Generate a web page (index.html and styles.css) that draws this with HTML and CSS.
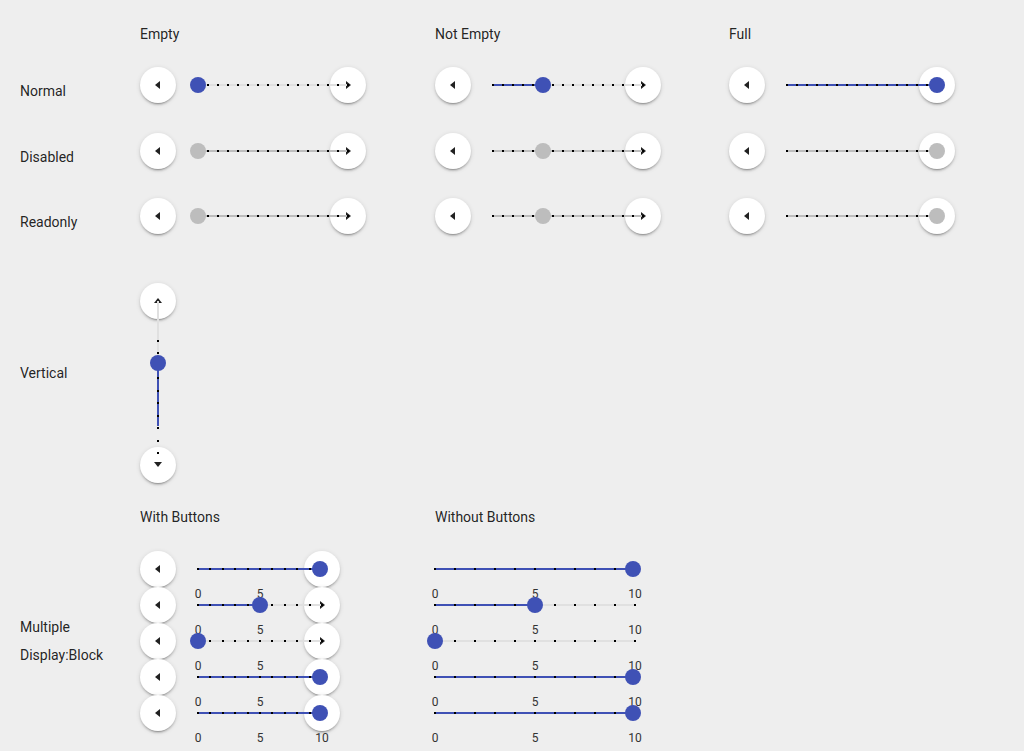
FILE: index.html
```html
<!DOCTYPE html>
<html lang="en">
<head>
    <meta charset="UTF-8">
    <meta name="viewport" content="width=device-width, initial-scale=1.0">
    <title>Slider Demo</title>
    <link rel="stylesheet" href="styles.css">
</head>
<body>
    <div class="page">
        <!-- States -->
        <div class="row head-row">
            <div class="row-label"></div>
            <div class="col-title">Empty</div>
            <div class="col-title">Not Empty</div>
            <div class="col-title">Full</div>
        </div>

        <div class="row slider-row">
            <div class="row-label">Normal</div>
            <div class="cell">
                <div class="slider">
                    <span class="slider-btn"><i class="arrow arrow-left"></i></span>
                    <div class="track">
                        <div class="track-fill" style="width: 0%"></div>
                        <div class="track-ticks"></div>
                        <div class="thumb" style="left: 0%"></div>
                    </div>
                    <span class="slider-btn"><i class="arrow arrow-right"></i></span>
                </div>
            </div>
            <div class="cell">
                <div class="slider">
                    <span class="slider-btn"><i class="arrow arrow-left"></i></span>
                    <div class="track">
                        <div class="track-fill" style="width: 33.3%"></div>
                        <div class="track-ticks"></div>
                        <div class="thumb" style="left: 33.3%"></div>
                    </div>
                    <span class="slider-btn"><i class="arrow arrow-right"></i></span>
                </div>
            </div>
            <div class="cell">
                <div class="slider">
                    <span class="slider-btn"><i class="arrow arrow-left"></i></span>
                    <div class="track">
                        <div class="track-fill" style="width: 100%"></div>
                        <div class="track-ticks"></div>
                        <div class="thumb" style="left: 100%"></div>
                    </div>
                    <span class="slider-btn"><i class="arrow arrow-right"></i></span>
                </div>
            </div>
        </div>

        <div class="row slider-row row-disabled">
            <div class="row-label">Disabled</div>
            <div class="cell">
                <div class="slider is-disabled">
                    <span class="slider-btn"><i class="arrow arrow-left"></i></span>
                    <div class="track">
                        <div class="track-ticks"></div>
                        <div class="thumb" style="left: 0%"></div>
                    </div>
                    <span class="slider-btn"><i class="arrow arrow-right"></i></span>
                </div>
            </div>
            <div class="cell">
                <div class="slider is-disabled">
                    <span class="slider-btn"><i class="arrow arrow-left"></i></span>
                    <div class="track">
                        <div class="track-ticks"></div>
                        <div class="thumb" style="left: 33.3%"></div>
                    </div>
                    <span class="slider-btn"><i class="arrow arrow-right"></i></span>
                </div>
            </div>
            <div class="cell">
                <div class="slider is-disabled">
                    <span class="slider-btn"><i class="arrow arrow-left"></i></span>
                    <div class="track">
                        <div class="track-ticks"></div>
                        <div class="thumb" style="left: 100%"></div>
                    </div>
                    <span class="slider-btn"><i class="arrow arrow-right"></i></span>
                </div>
            </div>
        </div>

        <div class="row slider-row row-readonly">
            <div class="row-label">Readonly</div>
            <div class="cell">
                <div class="slider is-disabled">
                    <span class="slider-btn"><i class="arrow arrow-left"></i></span>
                    <div class="track">
                        <div class="track-ticks"></div>
                        <div class="thumb" style="left: 0%"></div>
                    </div>
                    <span class="slider-btn"><i class="arrow arrow-right"></i></span>
                </div>
            </div>
            <div class="cell">
                <div class="slider is-disabled">
                    <span class="slider-btn"><i class="arrow arrow-left"></i></span>
                    <div class="track">
                        <div class="track-ticks"></div>
                        <div class="thumb" style="left: 33.3%"></div>
                    </div>
                    <span class="slider-btn"><i class="arrow arrow-right"></i></span>
                </div>
            </div>
            <div class="cell">
                <div class="slider is-disabled">
                    <span class="slider-btn"><i class="arrow arrow-left"></i></span>
                    <div class="track">
                        <div class="track-ticks"></div>
                        <div class="thumb" style="left: 100%"></div>
                    </div>
                    <span class="slider-btn"><i class="arrow arrow-right"></i></span>
                </div>
            </div>
        </div>

        <!-- Vertical -->
        <div class="row vertical-row">
            <div class="row-label vertical-label">Vertical</div>
            <div class="cell">
                <div class="vslider">
                    <span class="slider-btn"><i class="arrow arrow-up"></i></span>
                    <div class="vtrack">
                        <div class="vtrack-line"></div>
                        <div class="vtrack-fill"></div>
                        <div class="vtrack-ticks"></div>
                        <div class="thumb vthumb"></div>
                    </div>
                    <span class="slider-btn"><i class="arrow arrow-down"></i></span>
                </div>
            </div>
        </div>

        <!-- Multiple -->
        <div class="row head-row head-row-multi">
            <div class="row-label"></div>
            <div class="col-title">With Buttons</div>
            <div class="col-title">Without Buttons</div>
        </div>

        <div class="row multi-row">
            <div class="row-label multi-label">Multiple<br>Display:Block</div>
            <div class="cell stack">
                <div class="slider slider-compact">
                    <span class="slider-btn"><i class="arrow arrow-left"></i></span>
                    <div class="track">
                        <div class="track-fill" style="width: 100%"></div>
                        <div class="track-ticks"></div>
                        <div class="thumb is-max" style="left: 100%"></div>
                        <div class="scale"><span class="s-min">0</span><span class="s-mid">5</span><span class="s-max">10</span></div>
                    </div>
                    <span class="slider-btn"><i class="arrow arrow-right"></i></span>
                </div>
                <div class="slider slider-compact">
                    <span class="slider-btn"><i class="arrow arrow-left"></i></span>
                    <div class="track">
                        <div class="track-fill" style="width: 50%"></div>
                        <div class="track-ticks"></div>
                        <div class="thumb" style="left: 50%"></div>
                        <div class="scale"><span class="s-min">0</span><span class="s-mid">5</span><span class="s-max">10</span></div>
                    </div>
                    <span class="slider-btn"><i class="arrow arrow-right"></i></span>
                </div>
                <div class="slider slider-compact">
                    <span class="slider-btn"><i class="arrow arrow-left"></i></span>
                    <div class="track">
                        <div class="track-fill" style="width: 0%"></div>
                        <div class="track-ticks"></div>
                        <div class="thumb" style="left: 0%"></div>
                        <div class="scale"><span class="s-min">0</span><span class="s-mid">5</span><span class="s-max">10</span></div>
                    </div>
                    <span class="slider-btn"><i class="arrow arrow-right"></i></span>
                </div>
                <div class="slider slider-compact">
                    <span class="slider-btn"><i class="arrow arrow-left"></i></span>
                    <div class="track">
                        <div class="track-fill" style="width: 100%"></div>
                        <div class="track-ticks"></div>
                        <div class="thumb is-max" style="left: 100%"></div>
                        <div class="scale"><span class="s-min">0</span><span class="s-mid">5</span><span class="s-max">10</span></div>
                    </div>
                    <span class="slider-btn"><i class="arrow arrow-right"></i></span>
                </div>
                <div class="slider slider-compact">
                    <span class="slider-btn"><i class="arrow arrow-left"></i></span>
                    <div class="track">
                        <div class="track-fill" style="width: 100%"></div>
                        <div class="track-ticks"></div>
                        <div class="thumb is-max" style="left: 100%"></div>
                        <div class="scale"><span class="s-min">0</span><span class="s-mid">5</span><span class="s-max">10</span></div>
                    </div>
                    <span class="slider-btn"><i class="arrow arrow-right"></i></span>
                </div>
            </div>
            <div class="cell stack">
                <div class="slider slider-plain">
                    <div class="track">
                        <div class="track-fill" style="width: 100%"></div>
                        <div class="track-ticks"></div>
                        <div class="thumb is-max" style="left: 100%"></div>
                        <div class="scale"><span class="s-min">0</span><span class="s-mid">5</span><span class="s-max">10</span></div>
                    </div>
                </div>
                <div class="slider slider-plain">
                    <div class="track">
                        <div class="track-fill" style="width: 50%"></div>
                        <div class="track-ticks"></div>
                        <div class="thumb" style="left: 50%"></div>
                        <div class="scale"><span class="s-min">0</span><span class="s-mid">5</span><span class="s-max">10</span></div>
                    </div>
                </div>
                <div class="slider slider-plain">
                    <div class="track">
                        <div class="track-fill" style="width: 0%"></div>
                        <div class="track-ticks"></div>
                        <div class="thumb" style="left: 0%"></div>
                        <div class="scale"><span class="s-min">0</span><span class="s-mid">5</span><span class="s-max">10</span></div>
                    </div>
                </div>
                <div class="slider slider-plain">
                    <div class="track">
                        <div class="track-fill" style="width: 100%"></div>
                        <div class="track-ticks"></div>
                        <div class="thumb is-max" style="left: 100%"></div>
                        <div class="scale"><span class="s-min">0</span><span class="s-mid">5</span><span class="s-max">10</span></div>
                    </div>
                </div>
                <div class="slider slider-plain">
                    <div class="track">
                        <div class="track-fill" style="width: 100%"></div>
                        <div class="track-ticks"></div>
                        <div class="thumb is-max" style="left: 100%"></div>
                        <div class="scale"><span class="s-min">0</span><span class="s-mid">5</span><span class="s-max">10</span></div>
                    </div>
                </div>
            </div>
        </div>
    </div>
</body>
</html>
```

FILE: styles.css
```css
/* Global styles */
html,
body {
    background-color: #eeeeee;
}

body {
    margin: 0;
    padding: 0;
    font-family: Roboto, 'Liberation Sans', sans-serif;
    font-size: 14px;
    color: rgba(0, 0, 0, 0.87);
}

.page {
    padding: 24px 0 20px 20px;
}

/* Grid rows */
.row {
    display: grid;
    grid-template-columns: 120px 295px 294px 295px;
}

.head-row {
    line-height: 20px;
}

.head-row-multi {
    margin-top: 24px;
}

.row-label {
    line-height: 20px;
}

.slider-row {
    margin-top: 23px;
}

.slider-row .row-label {
    padding-top: 14px;
}

.row-disabled {
    margin-top: 30px;
}

.row-readonly {
    margin-top: 29px;
}

.vertical-row {
    margin-top: 49px;
}

.vertical-label {
    padding-top: 80px;
}

.multi-row {
    margin-top: 24px;
}

.multi-label {
    padding-top: 62px;
    line-height: 28px;
}

.stack {
    display: flex;
    flex-direction: column;
}

/* Slider */
.slider {
    display: flex;
    align-items: center;
    width: 226px;
    height: 36px;
    position: relative;
    z-index: 0;
    --step: 10px;
}

.slider-btn {
    flex: none;
    width: 36px;
    height: 36px;
    border-radius: 50%;
    background-color: #fff;
    box-shadow: 0 3px 1px -2px rgba(0, 0, 0, 0.2), 0 2px 2px 0 rgba(0, 0, 0, 0.14), 0 1px 5px 0 rgba(0, 0, 0, 0.12);
    display: flex;
    align-items: center;
    justify-content: center;
}

.arrow {
    width: 0;
    height: 0;
    border-style: solid;
    border-color: transparent;
}

.arrow-left {
    border-width: 4px 5px 4px 0;
    border-right-color: #212121;
    margin-left: -1px;
}

.arrow-right {
    border-width: 4px 0 4px 5px;
    border-left-color: #212121;
    margin-left: 1px;
}

.arrow-up {
    border-width: 0 4px 5px 4px;
    border-bottom-color: #212121;
    margin-top: -2px;
}

.arrow-down {
    border-width: 5px 4px 0 4px;
    border-top-color: #212121;
    margin-top: -1px;
}

.track {
    position: relative;
    z-index: 1;
    flex: none;
    width: 150px;
    height: 2px;
    margin: 0 -18px 0 22px;
    background-color: #e0e0e0;
}

.track-fill {
    position: absolute;
    left: 0;
    top: 0;
    height: 2px;
    background-color: #3f51b5;
}

.track-ticks {
    position: absolute;
    left: -1px;
    top: 0;
    width: calc(100% + 2px);
    height: 2px;
    background: repeating-linear-gradient(to right, #000 0 2px, transparent 2px var(--step));
}

.thumb {
    position: absolute;
    top: 50%;
    width: 16px;
    height: 16px;
    border-radius: 50%;
    background-color: #3f51b5;
    transform: translate(-50%, -50%);
}

/* Disabled / readonly */
.is-disabled .track {
    background-color: #bdbdbd;
}

.is-disabled .thumb {
    background-color: #bdbdbd;
}

/* Multiple */
.slider-compact {
    width: 200px;
    --step: 12.4px;
}

.slider-compact .track {
    width: 124px;
}

.slider-plain {
    width: 200px;
    --step: 20px;
}

.slider-plain .track {
    width: 200px;
    margin: 0;
}

.slider-compact .is-max,
.slider-plain .is-max {
    margin-left: -2px;
}

.scale {
    position: absolute;
    left: 0;
    right: 0;
    top: 19px;
    height: 14px;
    font-size: 12px;
    line-height: 14px;
    color: #333;
}

.scale span {
    position: absolute;
    top: 0;
    transform: translateX(-50%);
}

.s-min {
    left: 0;
}

.s-mid {
    left: 50%;
}

.s-max {
    left: 100%;
}

/* Vertical slider */
.vslider {
    display: flex;
    flex-direction: column;
    align-items: center;
    width: 36px;
}

.vtrack {
    position: relative;
    z-index: 1;
    width: 2px;
    height: 152px;
    margin: -18px 0 -6px;
}

.vtrack-line {
    position: absolute;
    left: 0;
    top: 0;
    width: 2px;
    height: 62px;
    background-color: #e0e0e0;
}

.vtrack-fill {
    position: absolute;
    left: 0;
    top: 62px;
    width: 2px;
    height: 63px;
    background-color: #3f51b5;
}

.vtrack-ticks {
    position: absolute;
    left: 0;
    top: 39px;
    width: 2px;
    height: 114px;
    background: repeating-linear-gradient(to bottom, #000 0 2px, transparent 2px 12.44px);
}

.vthumb {
    left: 50%;
    top: 62px;
}
```
